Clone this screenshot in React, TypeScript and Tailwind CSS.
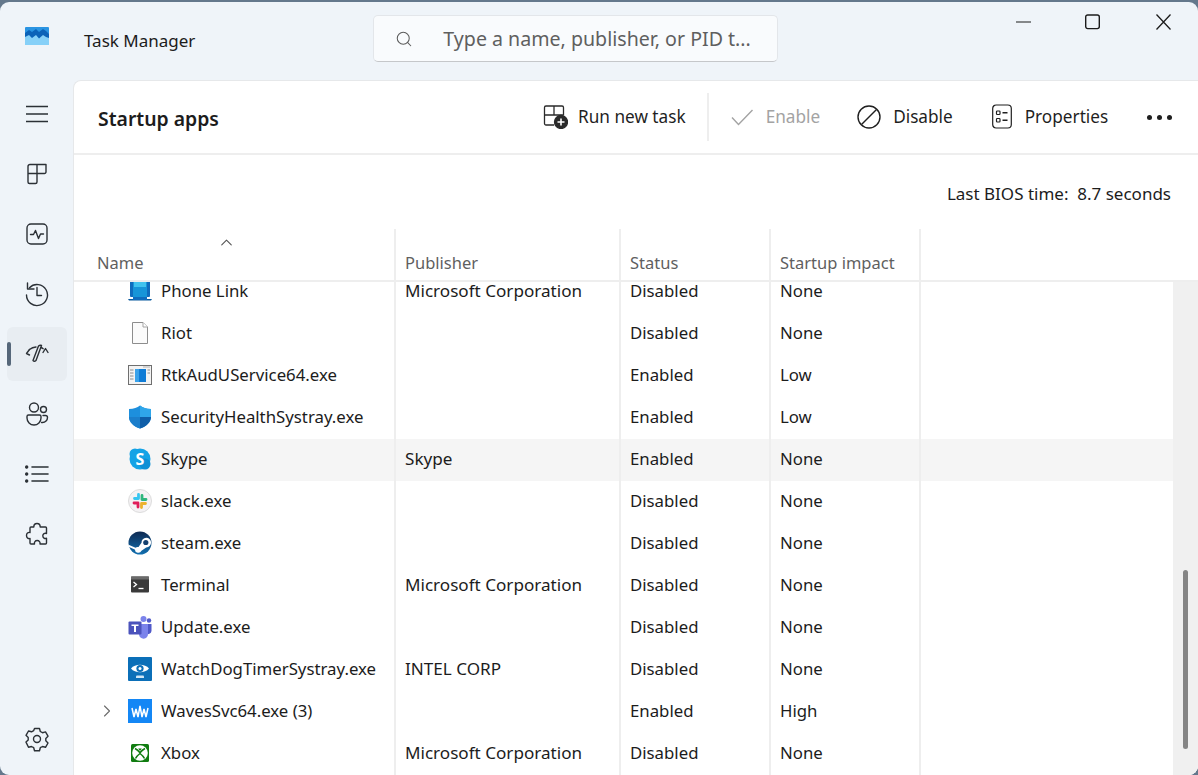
import type { ReactNode } from "react";
import { Search, ChevronUp, ChevronRight } from "lucide-react";

const font = "font-['Noto_Sans','Open_Sans',sans-serif]";

function NavIcon({ children }: { children: ReactNode }) {
  return (
    <svg width="26" height="26" viewBox="0 0 26 26" fill="none" stroke="#2b3036" strokeWidth="1.4" strokeLinecap="round" strokeLinejoin="round">
      {children}
    </svg>
  );
}

const navItems: { key: string; icon: ReactNode; active?: boolean }[] = [
  { key: "menu", icon: <NavIcon><path d="M2 5.500h22M2 13h22M2 20.500h22" strokeLinecap="butt" /></NavIcon> },
  { key: "processes", icon: <NavIcon><path d="M4 12.500V5.500a2 2 0 0 1 2-2h16v7.500a1.500 1.500 0 0 1-1.500 1.500H13v8.500a1.500 1.500 0 0 1-1.500 1.500H5.500A1.500 1.500 0 0 1 4 21V12.500h9M13 3.500v9" /></NavIcon> },
  { key: "performance", icon: <NavIcon><rect x="3" y="3" width="20" height="20" rx="4" /><path d="M6.500 13.500h3l2-4 3 8 2-4.500h3" /></NavIcon> },
  { key: "history", icon: <NavIcon><path d="M3.500 2v6H10" /><path d="M5.500 6.700A10.500 10.500 0 1 1 2.500 14" /><path d="M13 6.500v8h4.500" /></NavIcon> },
  { key: "startup", active: true, icon: <NavIcon><path d="M5.500 8.500L2.500 12.500L5.500 14" /><path d="M5.500 8.500C7.500 7 9.500 6.200 12 6" /><path d="M17 6.500c.8.300 1.500.7 2.200 1.200" /><path d="M19 11.500L21.500 7.500L24 11.500" /><path d="M17.500 4.500L12 19.500Q10.300 21 9 19.500L14.500 5Q16 3.800 17.500 4.500z" /></NavIcon> },
  { key: "users", icon: <NavIcon><circle cx="10" cy="6.500" r="4.500" /><circle cx="19.500" cy="8.500" r="3" /><path d="M3 15.500a1.500 1.500 0 0 1 1.500-1.500h11a1.500 1.500 0 0 1 1.500 1.500v1.500a6.500 6.500 0 0 1-14 0v-1.500z" /><path d="M19 14.500h2.500a2 2 0 0 1 2 2 5 5 0 0 1-5 5h-1" /></NavIcon> },
  { key: "details", icon: <NavIcon><path d="M8 6h16M8 13h16M8 20h16" strokeWidth="1.600" /><circle cx="2.700" cy="6" r="1" fill="#2b3036" /><circle cx="2.700" cy="13" r="1" fill="#2b3036" /><circle cx="2.700" cy="20" r="1" fill="#2b3036" /></NavIcon> },
  { key: "services", icon: <NavIcon><path d="M13 2.500c2.200 0 3.200 1.500 3.200 3.500h5.300a1 1 0 0 1 1 1v5.500c-1.800-.8-3.700.3-3.700 2.300s1.900 3.200 3.700 2.400V22a1 1 0 0 1-1 1H16c.5-1.800-.8-3.500-2.800-3.500S10 21.200 10.500 23H7a1 1 0 0 1-1-1v-4.500C4 18 2.500 16.500 2.500 14.500S4 11 6 11.500V7a1 1 0 0 1 1-1h2.800c0-2 1-3.500 3.200-3.500z" /></NavIcon> },
];

const rows = [
  { name: "Phone Link", publisher: "Microsoft Corporation", status: "Disabled", impact: "None", icon: "phone" },
  { name: "Riot", publisher: "", status: "Disabled", impact: "None", icon: "file" },
  { name: "RtkAudUService64.exe", publisher: "", status: "Enabled", impact: "Low", icon: "rtk" },
  { name: "SecurityHealthSystray.exe", publisher: "", status: "Enabled", impact: "Low", icon: "shield" },
  { name: "Skype", publisher: "Skype", status: "Enabled", impact: "None", icon: "skype", selected: true },
  { name: "slack.exe", publisher: "", status: "Disabled", impact: "None", icon: "slack" },
  { name: "steam.exe", publisher: "", status: "Disabled", impact: "None", icon: "steam" },
  { name: "Terminal", publisher: "Microsoft Corporation", status: "Disabled", impact: "None", icon: "terminal" },
  { name: "Update.exe", publisher: "", status: "Disabled", impact: "None", icon: "teams" },
  { name: "WatchDogTimerSystray.exe", publisher: "INTEL CORP", status: "Disabled", impact: "None", icon: "watchdog" },
  { name: "WavesSvc64.exe (3)", publisher: "", status: "Enabled", impact: "High", icon: "waves", expandable: true },
  { name: "Xbox", publisher: "Microsoft Corporation", status: "Disabled", impact: "None", icon: "xbox" },
];

function AppIcon({ kind }: { kind: string }) {
  const box = { width: 24, height: 24, viewBox: "0 0 24 24" };
  switch (kind) {
    case "phone":
      return (
        <svg {...box}>
          <rect x="2" y="0" width="20" height="18" rx="1" fill="#0f6cbd" />
          <rect x="5" y="0" width="14" height="20" fill="#1795d8" />
          <rect x="6" y="1" width="12" height="7" fill="#41c3ee" />
          <path d="M0 20h24l-1 1.500H1z" fill="#0b5a9e" />
          <rect x="5" y="18" width="14" height="3" fill="#0f6cbd" />
        </svg>
      );
    case "file":
      return (
        <svg {...box}>
          <path d="M4.500 1.500h10.500l4.500 4.500v16.500h-15z" fill="#fbfbfb" stroke="#8d8d8d" />
          <path d="M15 1.500v4.500h4.500" fill="#fff" stroke="#a5a5a5" />
        </svg>
      );
    case "rtk":
      return (
        <svg {...box}>
          <rect x="0.500" y="2.500" width="23" height="19" fill="#f3f3f3" stroke="#6f6f6f" />
          <path d="M15 4h7" stroke="#b5b5b5" />
          <rect x="7" y="6" width="11" height="13" fill="#0f7cd6" />
          <rect x="7" y="6" width="4" height="13" fill="#3aa2ea" />
          <path d="M2 7h3.500M2 10h3.500M2 13h3.500M2 16h3.500M19.500 7H22M19.500 10H22" stroke="#8c8c8c" />
        </svg>
      );
    case "shield":
      return (
        <svg {...box}>
          <path d="M12 .5c3 2.300 6 3.300 11 3.500v8c0 5.500-5 9.500-11 11.500C6 21.500 1 17.500 1 12V4c5-.2 8-1.200 11-3.500z" fill="#1d8fdd" />
          <path d="M12 .5c3 2.300 6 3.300 11 3.500v8H12z" fill="#2fa6ea" />
          <path d="M12 12h11c0 5.500-5 9.500-11 11.500z" fill="#0f5ea8" />
          <path d="M1 12h11v11.500C6 21.500 1 17.500 1 12z" fill="#1b7ecb" />
        </svg>
      );
    case "skype":
      return (
        <svg {...box}>
          <circle cx="12" cy="12" r="10.500" fill="#14a3e6" />
          <circle cx="7" cy="7" r="5.500" fill="#14a3e6" />
          <circle cx="17" cy="17" r="5.500" fill="#0e90d6" />
          <text x="12" y="17.500" textAnchor="middle" fontSize="16" fontWeight="700" fill="#fff" fontFamily="Noto Sans">S</text>
        </svg>
      );
    case "slack":
      return (
        <svg {...box}>
          <circle cx="12" cy="12" r="11.500" fill="#f4f2f4" stroke="#dcdcdc" />
          <path d="M10.500 5.500v4H6.500" stroke="#36c5f0" strokeWidth="2.800" strokeLinecap="round" strokeLinejoin="round" fill="none" />
          <path d="M14 10.500V6.500M14 10.500h4" stroke="#2eb67d" strokeWidth="2.800" strokeLinecap="round" fill="none" />
          <path d="M13.500 14.500h4M13.500 14.500v4" stroke="#ecb22e" strokeWidth="2.800" strokeLinecap="round" fill="none" />
          <path d="M10 14v4M10 14H6" stroke="#e01e5a" strokeWidth="2.800" strokeLinecap="round" fill="none" />
        </svg>
      );
    case "steam":
      return (
        <svg {...box}>
          <defs>
            <linearGradient id="steamBg" x1="0" y1="0" x2="0" y2="1">
              <stop offset="0" stopColor="#0f2a52" />
              <stop offset="1" stopColor="#1270b0" />
            </linearGradient>
          </defs>
          <circle cx="12" cy="12" r="11.500" fill="url(#steamBg)" />
          <path d="M0 13.500l7.500 3.200a3.500 3.500 0 0 1 3-.7l3-4.200a4.800 4.800 0 1 1 4.700 4.600l-4.700 3.300A3.500 3.500 0 0 1 6.800 18.500L1 16z" fill="#fff" />
          <circle cx="17.800" cy="11.500" r="2.600" fill="#14406f" />
        </svg>
      );
    case "terminal":
      return (
        <svg {...box}>
          <rect x="3" y="3.500" width="18" height="16" rx="1" fill="#3a3a3a" />
          <rect x="3" y="3.500" width="18" height="3" fill="#6b6b6b" />
          <path d="M5.500 9l3 2.500-3 2.500" stroke="#fff" strokeWidth="1.300" fill="none" />
          <path d="M10.500 15.500h5" stroke="#fff" strokeWidth="1.300" />
        </svg>
      );
    case "teams":
      return (
        <svg {...box}>
          <circle cx="15.500" cy="4" r="3" fill="#7b83eb" />
          <circle cx="21" cy="5.500" r="2.200" fill="#5059c9" />
          <path d="M18 9h5.500v7a3.500 3.500 0 0 1-5.500 2.500z" fill="#5059c9" />
          <path d="M9 9h11v10a4.500 4.500 0 0 1-9 .5z" fill="#7b83eb" />
          <rect x="0.500" y="6.500" width="13" height="13" rx="1" fill="#4b53bc" />
          <path d="M3.500 9.500h7v1.600H8v6H6v-6H3.500z" fill="#fff" />
        </svg>
      );
    case "watchdog":
      return (
        <svg {...box}>
          <rect x="0" y="0" width="24" height="24" rx="1" fill="#0b6fb8" />
          <path d="M3 11.500c4-5 14-5 18 0-4 5-14 5-18 0z" fill="#fff" />
          <circle cx="12" cy="11.500" r="3.600" fill="#0b6fb8" />
          <circle cx="12" cy="11.500" r="1.500" fill="#fff" />
          <path d="M8 21v-1.500a1 1 0 0 1 1-1h6a1 1 0 0 1 1 1V21z" fill="#cfe6f6" />
        </svg>
      );
    case "waves":
      return (
        <svg {...box}>
          <rect x="0" y="0" width="24" height="24" fill="#1487f5" />
          <path d="M4 9l2 9 2-8 2 8 2-11 2 11 2-8 2 8 2-9" fill="none" stroke="#fff" strokeWidth="1.500" />
        </svg>
      );
    default:
      return (
        <svg {...box}>
          <rect x="3" y="3" width="18" height="18" rx="1.500" fill="#107c10" />
          <circle cx="12" cy="12" r="7.800" fill="#fff" />
          <path d="M7 7.500c2 1 3.800 2.700 5 4.200 1.200-1.500 3-3.200 5-4.200M7.500 17.500c1-2 2.700-3.700 4.500-5 1.800 1.300 3.500 3 4.500 5" fill="none" stroke="#107c10" strokeWidth="1.500" />
          <path d="M12 10l-1.800-2.500h3.600z" fill="#107c10" />
        </svg>
      );
  }
}

function ToolbarButton({ icon, label, muted, className }: { icon: ReactNode; label: string; muted?: boolean; className: string }) {
  return (
    <div className={`flex items-center ${className}`}>
      {icon}
      <span className={`text-[17.2px] ${muted ? "text-[#a3a3a3]" : "text-[#1f1f1f]"}`}>{label}</span>
    </div>
  );
}

export default function App() {
  return (
    <div className={`w-[1198px] h-[775px] overflow-hidden bg-[#64788c] pt-[2px] ${font}`}>
      <div className="flex h-[773px] flex-col overflow-hidden rounded-[9px] bg-[#eff4f9]">
        {/* Title bar */}
        <div className="flex h-[78px] shrink-0 items-start">
          <div className="ml-[25px] mt-[25px] w-[24px] h-[18px] shrink-0">
            <svg width="24" height="18" viewBox="0 0 24 18">
              <rect width="24" height="18" rx="1" fill="#2a94e2" />
              <path d="M0 6l4-3 3 2 4-3 3 3 4-3 3 2 3 3v11H0z" fill="#0b62b8" />
              <path d="M0 10l4-2 3 3 4-3 3 3.500 4-3.500 3 2 3 1v7.500H0z" fill="#86d0f8" />
            </svg>
          </div>
          <span className="ml-[35px] mt-[26px] text-[17px] text-[#1c1c1c]">Task Manager</span>
          <div className="ml-[178px] mt-[13px] flex h-[47px] w-[405px] items-center rounded-[5px] border border-[#e3e6ea] border-b-[#c5c7ca] bg-[#f9fbfd]">
            <Search className="ml-[21px] text-[#5c5c5c]" size={18} strokeWidth={1.4} />
            <span className="ml-[30px] text-[19.6px] text-[#5f5f5f]">Type a name, publisher, or PID t...</span>
          </div>
          <div className="ml-auto mt-[12px] flex items-center pr-[27px]">
            <svg width="15" height="16" viewBox="0 0 15 16" stroke="#1c1c1c" strokeWidth="1.200" fill="none" className="mr-[54px]">
              <path d="M0 8h15" />
            </svg>
            <svg width="15" height="16" viewBox="0 0 15 16" stroke="#1c1c1c" strokeWidth="1.400" fill="none" className="mr-[56px]">
              <rect x="0.700" y="1" width="13.600" height="13.600" rx="2" />
            </svg>
            <svg width="15" height="16" viewBox="0 0 15 16" stroke="#1c1c1c" strokeWidth="1.300" fill="none">
              <path d="M0.500 0.500l14 15M14.500 0.500l-14 15" />
            </svg>
          </div>
        </div>

        <div className="flex min-h-0 flex-1">
          {/* Sidebar */}
          <nav className="flex w-[73px] shrink-0 flex-col pb-[6px] pt-[4px]">
            {navItems.map((n) => (
              <div key={n.key} className="relative flex h-[60px] items-center justify-center">
                {n.active && (
                  <div className="absolute left-[7px] top-[3px] h-[54px] w-[60px] rounded-[6px] bg-[#e8edf2]">
                    <div className="absolute left-0 top-[15px] h-[24px] w-[4px] rounded-full bg-[#56677a]" />
                  </div>
                )}
                <div className="relative">{n.icon}</div>
              </div>
            ))}
            <div className="mt-auto flex h-[60px] items-center justify-center">
              <NavIcon>
                <circle cx="13" cy="13" r="3.500" />
                <path d="M10.500 2.500h5l.8 3 2.200 1.200 3-.8 2.500 4.300-2.200 2.200v2.400l2.200 2.200-2.500 4.300-3-.8-2.200 1.200-.8 3h-5l-.8-3-2.200-1.200-3 .8L2 16.100l2.200-2.200v-2.400L2 9.300l2.500-4.300 3 .8 2.200-1.200z" />
              </NavIcon>
            </div>
          </nav>

          {/* Main panel */}
          <main className="flex min-w-0 flex-1 flex-col overflow-hidden rounded-tl-[8px] border-l border-t border-[#e6e8ea] bg-white">
            <header className="relative flex h-[74px] shrink-0 items-center border-b-2 border-[#eeeeee] pl-[24px]">
              <h1 className="mt-[4px] w-[120px] whitespace-nowrap text-[19.4px] font-semibold text-[#1c1c1c]">Startup apps</h1>
              <ToolbarButton
                className="ml-[325px] gap-[10px]"
                label="Run new task"
                icon={
                  <svg width="25" height="25" viewBox="0 0 25 25" fill="none" stroke="#2a2a2a" strokeWidth="1.300">
                    <path d="M11 21H3a1.500 1.500 0 0 1-1.500-1.500v-16A1.500 1.500 0 0 1 3 2h16a1.500 1.500 0 0 1 1.500 1.500V11M1.500 11h19M11 2v9" />
                    <circle cx="18" cy="18" r="6.500" fill="#2a2a2a" />
                    <path d="M18 14.500v7M14.500 18h7" stroke="#fff" strokeWidth="1.600" />
                  </svg>
                }
              />
              <div className="ml-[21px] h-[48px] w-[2px] bg-[#eeeeee]" />
              <ToolbarButton
                muted
                className="ml-[21px] gap-[12px]"
                label="Enable"
                icon={
                  <svg width="24" height="24" viewBox="0 0 24 24" fill="none" stroke="#a3a3a3" strokeWidth="1.400">
                    <path d="M2 12.500l6.500 7L22.500 5" />
                  </svg>
                }
              />
              <ToolbarButton
                className="ml-[37px] gap-[12px]"
                label="Disable"
                icon={
                  <svg width="24" height="24" viewBox="0 0 24 24" fill="none" stroke="#1f1f1f" strokeWidth="1.400">
                    <circle cx="12" cy="12" r="11" />
                    <path d="M19.500 4.500L4.500 19.500" />
                  </svg>
                }
              />
              <ToolbarButton
                className="ml-[39px] gap-[13px]"
                label="Properties"
                icon={
                  <svg width="20" height="25" viewBox="0 0 20 25" fill="none" stroke="#1f1f1f" strokeWidth="1.200">
                    <rect x="0.700" y="1" width="18.600" height="23" rx="3.500" />
                    <rect x="4.500" y="7" width="3.500" height="3.500" rx=".8" />
                    <rect x="4.500" y="14.500" width="3.500" height="3.500" rx=".8" />
                    <path d="M10.500 8.800h5M10.500 16.200h5" strokeWidth="1.400" />
                  </svg>
                }
              />
              <div className="ml-[39px] flex gap-[5px]">
                <span className="h-[5px] w-[5px] rounded-full bg-[#1f1f1f]" />
                <span className="h-[5px] w-[5px] rounded-full bg-[#1f1f1f]" />
                <span className="h-[5px] w-[5px] rounded-full bg-[#1f1f1f]" />
              </div>
            </header>

            <div className="flex h-[74px] shrink-0 items-center justify-end pr-[27px] pt-[4px] text-[17px] text-[#1c1c1c]">
              <span>Last BIOS time:&nbsp; 8.7 seconds</span>
            </div>

            {/* Column header */}
            <div className="flex h-[53px] shrink-0 border-b-2 border-[#eeeeee] text-[16.5px] text-[#5f5f5f]">
              <div className="relative flex w-[322px] items-end border-r-2 border-[#eeeeee] pb-[4px] pl-[23px]">
                <ChevronUp size={19} strokeWidth={1.4} className="absolute left-[143px] top-[4px] text-[#555]" />
                Name
              </div>
              <div className="flex w-[225px] items-end border-r-2 border-[#eeeeee] pb-[4px] pl-[9px]">Publisher</div>
              <div className="flex w-[150px] items-end border-r-2 border-[#eeeeee] pb-[4px] pl-[9px]">Status</div>
              <div className="flex w-[150px] items-end border-r-2 border-[#eeeeee] pb-[4px] pl-[9px]">Startup impact</div>
            </div>

            {/* Rows + scrollbar */}
            <div className="flex min-h-0 flex-1">
              <div className="relative min-w-0 flex-1 overflow-hidden">
                <div className="-mt-[11px]">
                  {rows.map((r) => (
                    <div key={r.name} className={`flex h-[42px] items-center text-[16.8px] text-[#1c1c1c] ${r.selected ? "bg-[#f5f5f5]" : ""}`}>
                      <div className="flex h-full w-[322px] shrink-0 items-center border-r-2 border-[#eeeeee] pb-[2px]">
                        <div className="flex w-[54px] shrink-0 items-center justify-center pl-[10px]">
                          {r.expandable && <ChevronRight size={20} strokeWidth={1.3} className="ml-[2px] text-[#6b6b6b]" />}
                        </div>
                        <div className="h-[24px] w-[24px] shrink-0">
                          <AppIcon kind={r.icon} />
                        </div>
                        <span className="ml-[9px] whitespace-nowrap">{r.name}</span>
                      </div>
                      <div className="flex h-full w-[225px] shrink-0 items-center border-r-2 border-[#eeeeee] pb-[2px] pl-[9px] text-[17.1px]">{r.publisher}</div>
                      <div className="flex h-full w-[150px] shrink-0 items-center border-r-2 border-[#eeeeee] pb-[2px] pl-[9px]">{r.status}</div>
                      <div className="flex h-full w-[150px] shrink-0 items-center border-r-2 border-[#eeeeee] pb-[2px] pl-[9px]">{r.impact}</div>
                    </div>
                  ))}
                </div>
              </div>
              <div className="w-[25px] shrink-0 bg-[#f0f0f0] pl-[10px] pt-[288px]">
                <div className="h-[179px] w-[5px] rounded-full bg-[#858585]" />
              </div>
            </div>
          </main>
        </div>
      </div>
    </div>
  );
}
